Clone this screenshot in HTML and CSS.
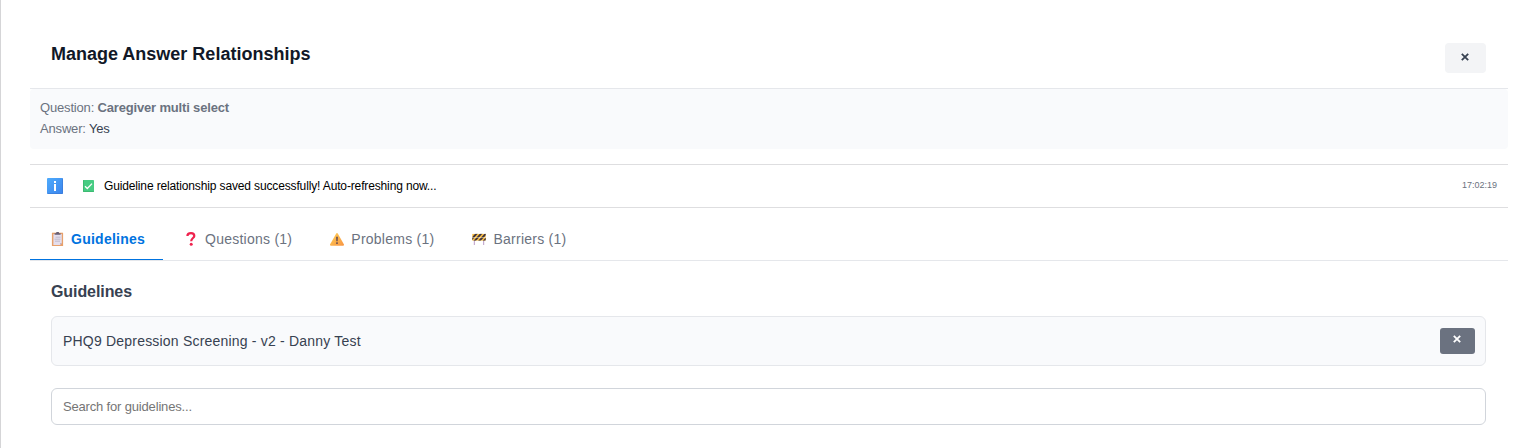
FILE: index.html
```html
<!DOCTYPE html>
<html lang="en">
<head>
<meta charset="utf-8">
<title>Manage Answer Relationships</title>
<link rel="stylesheet" href="styles.css">
</head>
<body>
<main class="panel">
  <header class="header">
    <h1 class="title">Manage Answer Relationships</h1>
    <button class="close" aria-label="Close"><svg width="8" height="8" viewBox="0 0 8 8"><path class="cross" d="M.8.8 7.2 7.2M7.2.8.8 7.2"/></svg></button>
  </header>
  <section class="context">
    <div>Question: <b>Caregiver multi select</b></div>
    <div>Answer: <span class="value">Yes</span></div>
  </section>
  <section class="alert">
    <svg class="info" width="16" height="16" viewBox="0 0 16 16"><defs><linearGradient id="blue" x2="1" y2="1"><stop stop-color="#4eabfc"/><stop offset="1" stop-color="#3b84ed"/></linearGradient></defs><rect width="16" height="16" rx="1" fill="url(#blue)"/><path d="M.5 15.5h15V.5" fill="none" stroke="#3978d4" stroke-opacity=".6"/><path d="M7 3h2v2H7zM7 6h2v7H7z" fill="#fff"/></svg>
    <svg class="check" width="11" height="12" viewBox="0 0 11 12"><rect width="11" height="12" rx=".7" fill="#47cc83"/><path d="M.4 0v11.6H11" fill="none" stroke="#3ab36b" stroke-width=".8"/><path d="m2 6.2 2.3 2.3L9 3.6" fill="none" stroke="#fff" stroke-width="1.3"/></svg>
    <span class="message">Guideline relationship saved successfully! Auto-refreshing now...</span>
    <time class="time">17:02:19</time>
  </section>
  <nav class="tabs">
    <a class="tab active"><svg class="icon" width="13" height="14" viewBox="0 0 13 14"><path d="M.9.7h11.2V14H.9z" fill="#e7a06b"/><path d="M2.4 2h8.400v9L9 13H2.4z" fill="#e4deed"/><path d="m9 13 .1-2h1.700z" fill="#bbaec8"/><path d="M3.600 1.200h1.700V0h2.600v1.200h1.700v1.600h-6z" fill="#665e75"/><path d="M4.500 5.200h5M3.500 7.200h6M4 9.200h5" stroke="#b9b1c4" stroke-width=".8"/></svg>Guidelines</a>
    <a class="tab"><svg class="icon" width="14" height="14" viewBox="0 0 14 14"><path d="M3.4 4.100C3.400 1.900 4.800 1.200 7 1.200c2.300 0 3.300 1 3.300 2.700C10.300 6 7.200 6.200 7.200 9.200" fill="none" stroke="#ef234e" stroke-width="2.200"/><circle cx="7.200" cy="12.200" r="1.500" fill="#ef234e"/></svg>Questions (1)</a>
    <a class="tab"><svg class="icon" width="14" height="14" viewBox="0 0 14 14"><defs><linearGradient id="amber" x2="1" y2="1"><stop stop-color="#ffd052"/><stop offset="1" stop-color="#f89545"/></linearGradient></defs><path d="M6.200 1.400q.8-1 1.600 0L14 12.500q.2 1.200-1 1.200H1q-1.200 0-1-1.200z" fill="url(#amber)"/><path d="M6.200 4.700h1.600l-.2 4.500H6.400zM6.300 10.300h1.400v1.600H6.300z" fill="#594252"/></svg>Problems (1)</a>
    <a class="tab"><svg class="icon" width="14" height="14" viewBox="0 0 15 14"><defs><clipPath id="boards"><path d="M.3 1.300h14.400v3.500H.3zM.3 5.300h14.400v3.700H.3z"/></clipPath></defs><path d="M2.500 8v5.400M12.500 8v5.400" stroke="#bd9fc9" stroke-width="1.100"/><g clip-path="url(#boards)"><path d="M0 1h15v9H0z" fill="#f9be42"/><path d="m-2 9 8-9M2 10l9-10M7 10l9-10M12 10l8-9" stroke="#3d3340" stroke-width="2"/></g></svg>Barriers (1)</a>
  </nav>
  <section class="content">
    <h2 class="heading">Guidelines</h2>
    <div class="card"><span class="name">PHQ9 Depression Screening - v2 - Danny Test</span><button class="remove" aria-label="Remove"><svg width="8" height="8" viewBox="0 0 8 8"><path class="cross" d="M.8.8 7.2 7.2M7.2.8.8 7.2"/></svg></button></div>
    <input class="search" placeholder="Search for guidelines...">
  </section>
</main>
</body>
</html>
```
FILE: styles.css
```css
* { box-sizing: border-box; }
body { margin: 0; height: 448px; overflow: hidden; border-left: 1px solid #d5d5d7; background: #fff; font-family: "Liberation Sans", Arial, sans-serif; }
button { border: 0; padding: 0; display: flex; align-items: center; justify-content: center; }
.cross { fill: none; stroke: currentColor; stroke-width: 1.8; }
.panel { margin: 0 27px 0 29px; }
.header { height: 89px; border-bottom: 1px solid #e5e7eb; padding: 43px 22px 0 21px; display: flex; justify-content: space-between; align-items: flex-start; }
.title { margin: 0; font-size: 18px; line-height: 22px; color: #111827; }
.close { width: 41px; height: 30px; border-radius: 4px; background: #f3f4f6; color: #374151; padding: 0 1px 2px 0; }
.context { height: 60px; background: #f9fafc; border-radius: 4px; padding: 8px 10px; font-size: 13px; line-height: 21px; letter-spacing: -.17px; color: #6b7280; }
.value { color: #374151; }
.alert { margin-top: 15px; height: 44px; border: solid #dedee0; border-width: 1px 0; display: flex; align-items: center; padding: 0 11px 0 17px; font-size: 12px; color: #000; }
.message { letter-spacing: -.14px; }
.check { margin: 0 10px 0 20px; }
.time { margin-left: auto; font-size: 9px; color: #6b7280; padding-bottom: 2px; }
.tabs { height: 53px; border-bottom: 1px solid #e5e7eb; display: flex; font-size: 14px; letter-spacing: .25px; color: #6b7280; }
.tab { height: 52px; display: flex; align-items: center; padding: 10px 17px 0 21px; white-space: nowrap; }
.icon { flex: none; margin-right: 7px; }
.active { width: 133px; border-bottom: 1px solid #0073e0; color: #0073e0; font-weight: 700; }
.heading { margin: 0; font-size: 16px; line-height: 20px; letter-spacing: -.08px; color: #374151; }
.content { padding: 21px 22px 0 21px; }
.card { margin-top: 14px; height: 50px; border: 1px solid #e5e7eb; border-radius: 6px; background: #f9fafc; display: flex; align-items: center; justify-content: space-between; padding: 0 10px 0 11px; font-size: 14px; color: #374151; }
.name { letter-spacing: .2px; }
.remove { width: 35px; height: 26px; background: #6b7280; color: #fff; border-radius: 3px; padding: 0 1px 4px 0; }
.search { display: block; margin-top: 22px; width: 100%; height: 37px; border: 1px solid #d1d5db; border-radius: 6px; padding: 0 11px; font: 13px "Liberation Sans", Arial, sans-serif; letter-spacing: -.17px; background: #fff; }
.search::placeholder { color: #757575; }
```
